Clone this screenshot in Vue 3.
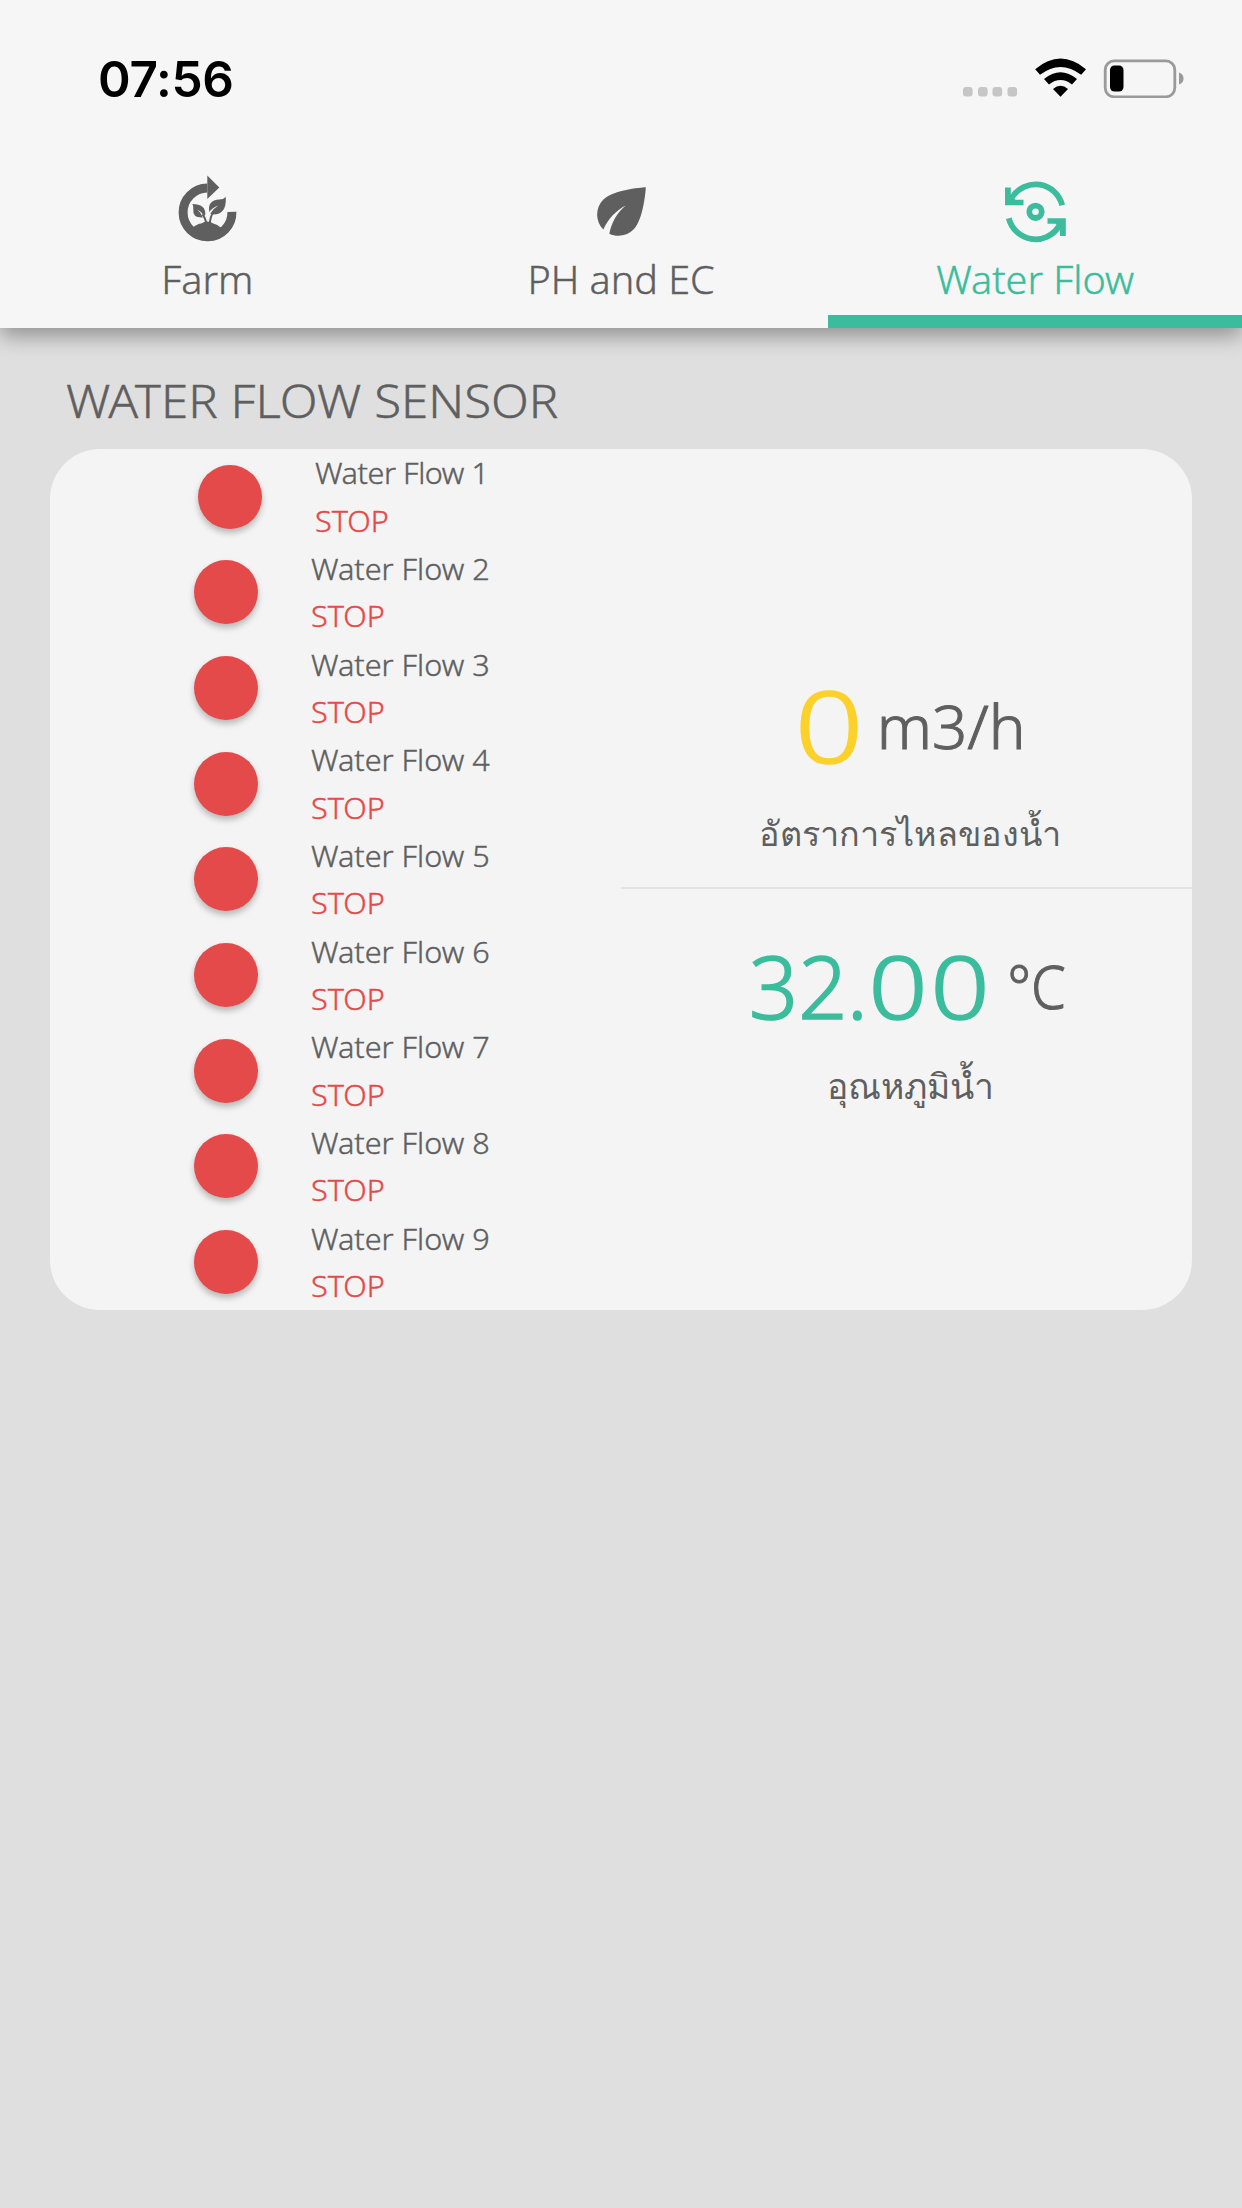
<template>
  <div class="app">
    <header class="header">
      <div class="status-bar">
        <span class="time">07:56</span>
        <svg class="status-icons" width="222" height="42" viewBox="962 56 222 42">
          <g fill="#c6c6c6">
            <rect v-for="x in [963, 978, 992.5, 1007.5]" :key="x" :x="x" y="87" width="9.6" height="9.6" rx="3" />
          </g>
          <path d="M1035.2 69.2 Q1060.5 48 1086 69.2 L1081.2 74.8 Q1060.5 59 1040 74.8 Z" />
          <path d="M1044 79 Q1060.5 65.5 1077 79 L1072 84.4 Q1060.5 75.5 1049 84.4 Z" />
          <path d="M1053 89 Q1060.5 82.5 1068 89 L1060.5 96.8 Z" />
          <rect x="1105.2" y="60.8" width="69.6" height="36" rx="9" fill="none" stroke="#9a9a9a" stroke-width="2.8" />
          <rect x="1110" y="65.5" width="13.5" height="26" rx="4.5" />
          <path d="M1179 72.5 Q1183.5 74 1183.5 78.5 Q1183.5 83 1179 84.5 Z" fill="#9a9a9a" />
        </svg>
      </div>
      <nav class="tabs">
        <button
          v-for="tab in tabs"
          :key="tab.id"
          class="tab"
          :class="[tab.id, { active: tab.id === activeTab }]"
          @click="activeTab = tab.id"
        >
          <svg v-if="tab.id === 'farm'" class="tab-icon" viewBox="0.7 0 73 73">
            <path d="M37 13 A24.4 24.4 0 1 0 61.6 36.8" fill="none" stroke="currentColor" stroke-width="9" />
            <path d="M37 0.5 L49 12.4 L37 24 Z" fill="currentColor" />
            <path d="M22 53 Q27 48.5 31 48.5 Q37 44.5 43 48.5 Q47 49 51 53 Q46 62 37 62 Q27 62 22 53 Z" fill="currentColor" />
            <path d="M22 29 Q35.5 29 35 39.5 L34 41 Q31 36.5 27 34.5 Q31 38 32.5 42.5 Q22 43 23 34.5 Q23.5 31 22 29 Z" fill="currentColor" />
            <path d="M55.5 22 Q56.5 39.5 43 39.5 Q41 39.5 40 38.5 Q43 33.5 48 30.5 Q42 32.5 39 37 Q37 25 49 24.5 Q53 24.5 55.5 22 Z" fill="currentColor" />
            <path d="M32 39.5 Q35 42 36.2 50 M39.5 50 Q39.5 41.5 44 35.5" fill="none" stroke="currentColor" stroke-width="2" />
          </svg>
          <svg v-else-if="tab.id === 'ph'" class="tab-icon" viewBox="0 0 24 24">
            <path
              fill="currentColor"
              d="M6.05 8.05c-2.73 2.73-2.73 7.15-.02 9.88 1.47-3.4 4.09-6.24 7.36-7.93-2.77 2.34-4.71 5.61-5.39 9.32 2.6 1.23 5.8.78 7.95-1.37C19.43 14.47 20 4 20 4S9.53 4.57 6.05 8.05z"
            />
          </svg>
          <svg v-else class="tab-icon" viewBox="0.5 0 73 73">
            <g fill="none" stroke="currentColor" stroke-width="5.8">
              <path d="M13.7 22.2 A27.5 27.5 0 0 1 63.7 30.3" />
              <path d="M60.3 51.4 A27.5 27.5 0 0 1 10.3 43.3" />
              <circle cx="37" cy="36.8" r="6.2" />
            </g>
            <path d="M6.5 12.6 H12.3 V20 L17 24.8 H25 V30.3 H6.5 Z" fill="currentColor" />
            <path d="M67.3 61 H61.5 V53.6 L57 48.8 H49 V43.3 H67.3 Z" fill="currentColor" />
          </svg>
          <span class="tab-label">{{ tab.label }}</span>
        </button>
      </nav>
    </header>

    <main class="content">
      <h1 class="title"><span>WATER FLOW SENSOR</span></h1>
      <section class="card">
        <ul class="sensor-list">
          <li v-for="sensor in sensors" :key="sensor.id" class="sensor">
            <span class="lamp"></span>
            <div class="sensor-info">
              <span class="sensor-name">Water Flow {{ sensor.id }}</span>
              <span class="sensor-status">{{ sensor.running ? 'RUN' : 'STOP' }}</span>
            </div>
          </li>
        </ul>
        <div class="readings">
          <div class="reading flow">
            <div class="reading-value">
              <span class="number">
                <span v-for="(char, i) in String(flowRate)" :key="i" :class="charClass(char)">{{ char }}</span>
              </span>
              <span class="unit">m3/h</span>
            </div>
            <span class="reading-label">อัตราการไหลของน้ำ</span>
          </div>
          <div class="reading temp">
            <div class="reading-value">
              <span class="number">
                <span v-for="(char, i) in temperature.toFixed(2)" :key="i" :class="charClass(char)">{{ char }}</span>
              </span>
              <span class="unit">°C</span>
            </div>
            <span class="reading-label">อุณหภูมิน้ำ</span>
          </div>
        </div>
      </section>
    </main>
  </div>
</template>

<script setup>
import { ref } from 'vue'

const tabs = [
  { id: 'farm', label: 'Farm' },
  { id: 'ph', label: 'PH and EC' },
  { id: 'water', label: 'Water Flow' }
]

const activeTab = ref('water')
const flowRate = ref(0)
const temperature = ref(32)

const sensors = ref(
  Array.from({ length: 9 }, (_, i) => ({ id: i + 1, running: false }))
)

// zeros are drawn wider than the other digits
const charClass = (char) => {
  if (char === '0') return 'char zero'
  if (char === '.') return 'char dot'
  return 'char'
}
</script>

<style>
body {
  margin: 0;
  background: #dfdfdf;
}
</style>

<style scoped>
.app {
  height: 2208px;
  overflow: hidden;
  background: #dfdfdf;
  color: #5f5f5f;
  font-family: 'Noto Sans', 'Open Sans', sans-serif;
  font-weight: 300;
  -webkit-text-stroke: 0.4px currentColor;
}

.header {
  position: relative;
  height: 328px;
  background: #f6f6f6;
  box-shadow: 0 8px 20px rgba(0, 0, 0, 0.35);
}

.status-bar {
  display: flex;
  justify-content: space-between;
  height: 158px;
  padding: 0 58px 0 98px;
  box-sizing: border-box;
}

.time {
  margin-top: 49px;
  font-family: Inter, sans-serif;
  font-size: 49.5px;
  font-weight: 600;
  line-height: 60px;
  letter-spacing: -0.3px;
  color: #000;
  -webkit-text-stroke: 0;
}

.status-icons {
  margin-top: 56px;
}

.tabs {
  display: grid;
  grid-template-columns: repeat(3, 1fr);
  height: 170px;
}

.tab {
  display: flex;
  flex-direction: column;
  align-items: center;
  padding: 17px 0 0;
  border: 0;
  border-bottom: 13px solid transparent;
  background: none;
  color: #5f5f5f;
  font: inherit;
  cursor: pointer;
}

.tab.active {
  color: #3bbd9d;
  border-bottom-color: #3bbd9d;
}

.tab-icon {
  width: 73px;
  height: 73px;
  overflow: visible;
}

.tab-label {
  margin-top: 6px;
  font-size: 38px;
  line-height: 50px;
  white-space: nowrap;
  transform: scaleX(1.04);
}

.content {
  padding: 0 50px;
}

.title {
  height: 121px;
  margin: 0;
  padding: 42px 0 0 16px;
  box-sizing: border-box;
  font-size: 46px;
  font-weight: 300;
  line-height: 60px;
}

.title span {
  display: inline-block;
  transform: scaleX(1.07);
  transform-origin: left;
}

.card {
  display: grid;
  grid-template-columns: 1fr 1fr;
  height: 861px;
  border-radius: 50px;
  background: #f4f4f4;
  overflow: hidden;
}

.sensor-list {
  display: grid;
  grid-template-rows: repeat(9, 1fr);
  margin: 0;
  padding: 0;
  list-style: none;
}

.sensor {
  display: flex;
  align-items: center;
  padding-left: 144px;
}

.sensor:first-child {
  padding-left: 148px;
}

.sensor:first-child .sensor-name {
  letter-spacing: -0.4px;
}

.lamp {
  width: 64px;
  height: 64px;
  margin-right: 53px;
  border-radius: 50%;
  background: #e44a4a;
  box-shadow: 0 4px 6px rgba(0, 0, 0, 0.25);
}

.sensor-info {
  display: flex;
  flex-direction: column;
  font-size: 29px;
  line-height: 47.5px;
  transform: scaleX(1.055);
  transform-origin: left;
}

.sensor-status {
  color: #e44a4a;
}

.readings {
  display: flex;
  flex-direction: column;
}

.reading {
  display: flex;
  flex-direction: column;
  align-items: center;
  padding-left: 4px;
}

.flow {
  height: 440px;
  box-sizing: border-box;
  padding-top: 217px;
  border-bottom: 2px solid #e4e4e4;
}

.temp {
  padding-top: 37px;
}

.reading-value {
  display: flex;
  gap: 14px;
  height: 120px;
}

.number {
  display: flex;
  font-size: 100px;
  line-height: 120px;
  -webkit-text-stroke: 1.6px currentColor;
}

.char {
  display: flex;
  justify-content: center;
}

.zero {
  width: 0.72em;
  transform: scaleX(1.2);
}

.dot {
  width: 0.23em;
}

.flow .number {
  margin-top: -2px;
  color: #fcd12a;
}

.temp .number {
  font-size: 86px;
  color: #3bbd9d;
}

.unit {
  font-size: 60px;
  line-height: 120px;
  -webkit-text-stroke: 1px currentColor;
}

.flow .unit {
  transform: scaleX(1.03);
}

.temp .unit {
  transform: scaleX(0.93);
}

.reading-label {
  font-size: 34.2px;
  line-height: 60px;
  white-space: nowrap;
  -webkit-text-stroke: 0;
}

.flow .reading-label {
  margin-top: 17px;
  padding-left: 2px;
}

.temp .reading-label {
  margin-top: 9px;
  padding-left: 3px;
  font-size: 35.5px;
}
</style>
